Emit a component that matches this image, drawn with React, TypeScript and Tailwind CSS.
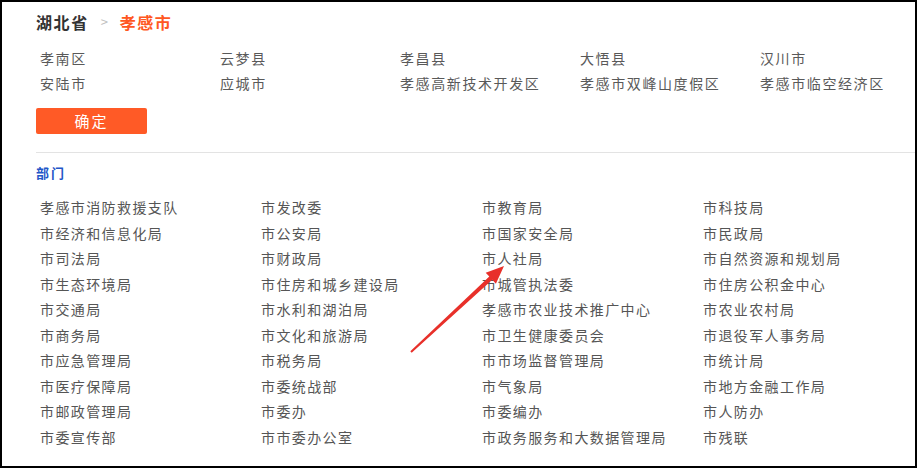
import React from "react";

const regions = [
  "孝南区", "云梦县", "孝昌县", "大悟县", "汉川市",
  "安陆市", "应城市", "孝感高新技术开发区", "孝感市双峰山度假区", "孝感市临空经济区",
];

const depts = [
  "孝感市消防救援支队", "市发改委", "市教育局", "市科技局",
  "市经济和信息化局", "市公安局", "市国家安全局", "市民政局",
  "市司法局", "市财政局", "市人社局", "市自然资源和规划局",
  "市生态环境局", "市住房和城乡建设局", "市城管执法委", "市住房公积金中心",
  "市交通局", "市水利和湖泊局", "孝感市农业技术推广中心", "市农业农村局",
  "市商务局", "市文化和旅游局", "市卫生健康委员会", "市退役军人事务局",
  "市应急管理局", "市税务局", "市市场监督管理局", "市统计局",
  "市医疗保障局", "市委统战部", "市气象局", "市地方金融工作局",
  "市邮政管理局", "市委办", "市委编办", "市人防办",
  "市委宣传部", "市市委办公室", "市政务服务和大数据管理局", "市残联",
];

const font = { fontFamily: '"Noto Sans CJK SC", "Noto Sans", sans-serif' };

export default function App() {
  return (
    <div
      className="relative w-[917px] h-[468px] bg-white border-2 border-black overflow-hidden"
      style={font}
    >
      <div className="pl-[34px] pt-[8px]">
        <div className="flex items-center h-[24px] text-[16px] font-bold tracking-[1.6px]">
          <span className="text-[#333]">湖北省</span>
          <span className="text-[#c0c0c0] font-normal text-[13px] ml-[12px] mr-[10px]">&gt;</span>
          <span className="text-[#ff5722]">孝感市</span>
        </div>

        <div className="mt-[11.5px] grid grid-cols-[180px_180px_180px_180px_180px] pl-[4px]">
          {regions.map((r) => (
            <div
              key={r}
              className="h-[25px] flex items-center text-[14px] tracking-[1.6px] text-[#595959] whitespace-nowrap"
            >
              {r}
            </div>
          ))}
        </div>

        <button className="mt-[12.5px] w-[111px] h-[26px] bg-[#ff5a26] rounded-[2px] text-white text-[15px] tracking-[2px] flex items-center justify-center">
          确定
        </button>

        <div className="mt-[18px] h-px bg-[#e3e3e3]" />

        <div className="mt-[10px] h-[20px] flex items-center text-[13px] font-bold tracking-[2px] text-[#2356c8]">
          部门
        </div>

        <div className="mt-[11.75px] grid grid-cols-[221px_221px_221px_221px] pl-[4px]">
          {depts.map((d, i) => (
            <div
              key={i}
              className="h-[25.5px] flex items-center text-[14px] tracking-[1.4px] text-[#555] whitespace-nowrap"
            >
              {d}
            </div>
          ))}
        </div>
      </div>

      <svg
        className="absolute left-[-2px] top-[-2px] pointer-events-none"
        width="917"
        height="468"
        viewBox="0 0 917 468"
      >
        <polygon
          points="411.68,352.73 492.29,279.81 495.89,283.71 504,266 485.71,272.7 489.31,276.59 410.32,351.27"
          fill="#e8302a"
        />
      </svg>
    </div>
  );
}
